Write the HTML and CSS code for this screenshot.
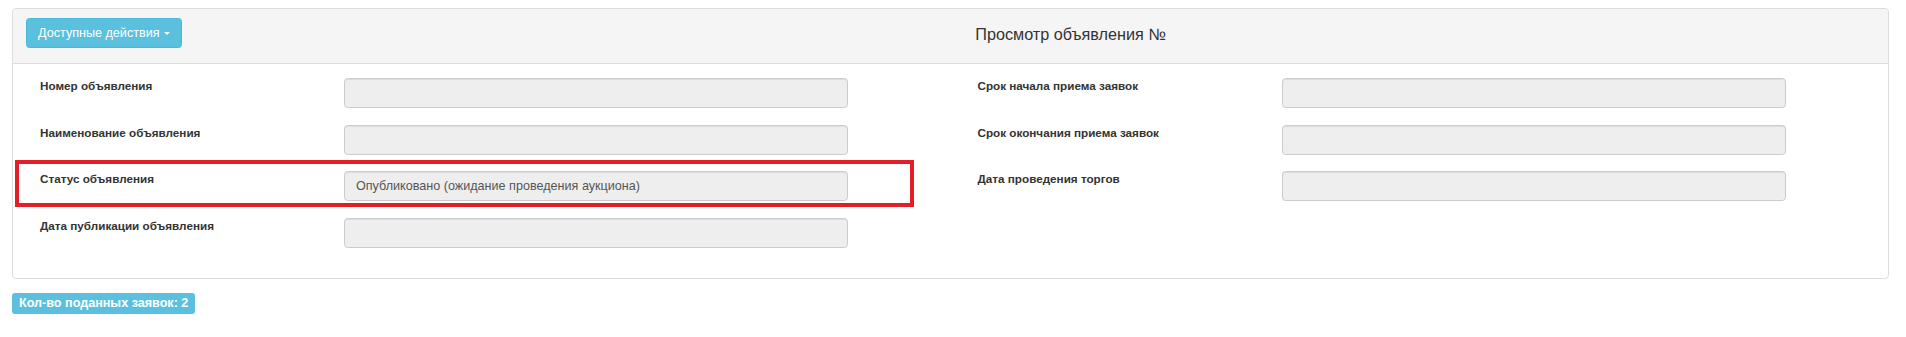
FILE: index.html
```html
<!DOCTYPE html>
<html>
  <head>
    <meta charset="UTF-8">
    <title>Просмотр объявления</title>
    <link rel="stylesheet" href="styles.css">
  </head>
  <body>
    <div class="page">
      <!-- Announcement panel -->
      <div class="panel">
        <div class="panel-heading">
          <button class="btn-info" type="button">Доступные действия <span class="caret"></span></button>
          <div class="panel-title">Просмотр объявления №</div>
        </div>

        <div class="panel-body">
          <!-- Left column -->
          <div class="form-col">
            <div class="form-row">
              <label class="form-label">Номер объявления</label>
              <input class="form-input" type="text" readonly value="">
            </div>
            <div class="form-row">
              <label class="form-label">Наименование объявления</label>
              <input class="form-input" type="text" readonly value="">
            </div>
            <div class="form-row marked">
              <label class="form-label">Статус объявления</label>
              <input class="form-input" type="text" readonly value="Опубликовано (ожидание проведения аукциона)">
              <div class="highlight"></div>
            </div>
            <div class="form-row">
              <label class="form-label">Дата публикации объявления</label>
              <input class="form-input" type="text" readonly value="">
            </div>
          </div>

          <!-- Right column -->
          <div class="form-col">
            <div class="form-row">
              <label class="form-label">Срок начала приема заявок</label>
              <input class="form-input" type="text" readonly value="">
            </div>
            <div class="form-row">
              <label class="form-label">Срок окончания приема заявок</label>
              <input class="form-input" type="text" readonly value="">
            </div>
            <div class="form-row">
              <label class="form-label">Дата проведения торгов</label>
              <input class="form-input" type="text" readonly value="">
            </div>
          </div>
        </div>
      </div>

      <!-- Bids counter -->
      <span class="label-info">Кол-во поданных заявок: 2</span>
    </div>
  </body>
</html>
```

FILE: styles.css
```css
/* Reset */
* {
  box-sizing: border-box;
  margin: 0;
  padding: 0;
}

html, body {
  background-color: #ffffff;
  font-family: "Liberation Sans", Arial, sans-serif;
  color: #333333;
}

/* Page wrapper */
.page {
  padding: 8px 17px 0 12px;
}

/* Panel */
.panel {
  border: 1px solid #dddddd;
  border-radius: 4px;
  background-color: #ffffff;
}

.panel-heading {
  display: flex;
  align-items: flex-start;
  height: 55px;
  padding: 9px 13px 0 13px;
  background-color: #f5f5f5;
  border-bottom: 1px solid #dddddd;
  border-radius: 3px 3px 0 0;
}

/* Dropdown button */
.btn-info {
  height: 30px;
  padding: 5px 11px;
  font-family: "Liberation Sans", Arial, sans-serif;
  font-size: 12.6px;
  line-height: 18px;
  color: #ffffff;
  background-color: #5bc0de;
  border: 1px solid #46b8da;
  border-radius: 3.6px;
  white-space: nowrap;
}

.caret {
  display: inline-block;
  width: 0;
  height: 0;
  margin-left: 1px;
  vertical-align: middle;
  border-top: 3.6px solid #ffffff;
  border-left: 3.6px solid transparent;
  border-right: 3.6px solid transparent;
}

.panel-title {
  flex: 1;
  padding-top: 7px;
  padding-left: 84px;
  text-align: center;
  font-size: 16.2px;
  line-height: 18.6px;
  color: #333333;
}

/* Form area: two equal columns */
.panel-body {
  display: grid;
  grid-template-columns: 1fr 1fr;
  padding: 14px 0 13px 0;
}

.form-col {
  padding-left: 27px;
}

.form-row {
  display: grid;
  grid-template-columns: 304px 504px;
  align-items: start;
  margin-bottom: 16.67px;
}

.form-row.marked {
  position: relative;
}

.form-label {
  padding-top: 1px;
  font-size: 11.7px;
  font-weight: bold;
  line-height: 13.5px;
  color: #333333;
}

.form-input {
  display: block;
  width: 504px;
  height: 30px;
  padding: 0 11px;
  font-family: "Liberation Sans", Arial, sans-serif;
  font-size: 12.6px;
  line-height: 28px;
  color: #555555;
  background-color: #eeeeee;
  border: 1px solid #cccccc;
  border-radius: 3.6px;
  box-shadow: inset 0 1px 1px rgba(0, 0, 0, 0.075);
  outline: none;
}

/* Red annotation frame over the status row */
.highlight {
  position: absolute;
  top: -11px;
  left: -25px;
  width: 899px;
  height: 47px;
  border: 4px solid #e31e24;
  pointer-events: none;
}

/* Bids counter label */
.label-info {
  display: inline-block;
  margin-top: 14px;
  padding: 3px 7px 4px 7px;
  font-size: 12.6px;
  font-weight: bold;
  line-height: 14px;
  color: #ffffff;
  background-color: #5bc0de;
  border-radius: 3px;
  white-space: nowrap;
}
```
